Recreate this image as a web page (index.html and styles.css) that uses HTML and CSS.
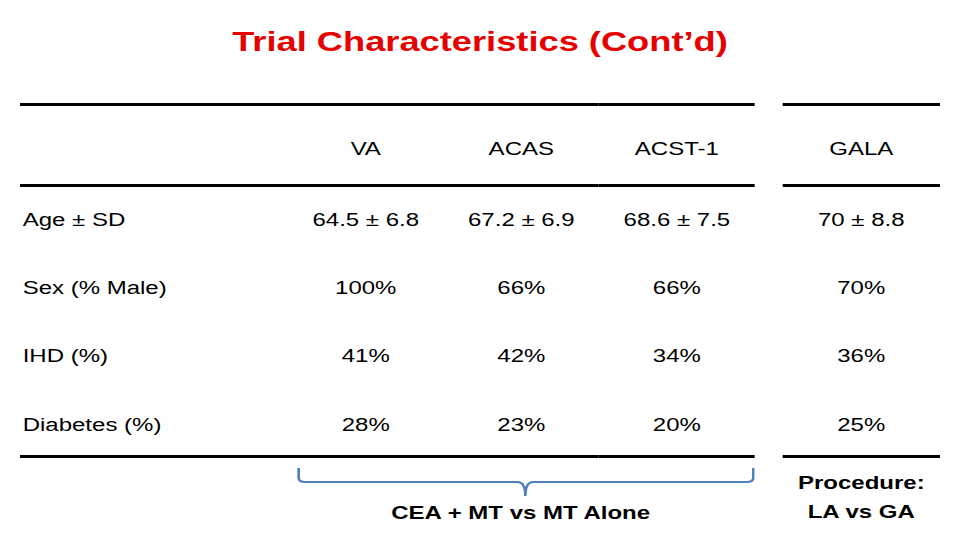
FILE: index.html
```html
<!DOCTYPE html>
<html lang="en">
<head>
<meta charset="utf-8">
<title>Trial Characteristics (Cont’d)</title>
<link rel="stylesheet" href="styles.css">
</head>
<body>
<div class="slide">
  <h1 class="title">Trial Characteristics (Cont’d)</h1>
  <div class="table">
    <div class="th label"></div>
    <div class="th">VA</div>
    <div class="th">ACAS</div>
    <div class="th">ACST-1</div>
    <div class="spacer"></div>
    <div class="th">GALA</div>

    <div class="td label">Age ± SD</div>
    <div class="td">64.5 ± 6.8</div>
    <div class="td">67.2 ± 6.9</div>
    <div class="td">68.6 ± 7.5</div>
    <div class="spacer"></div>
    <div class="td">70 ± 8.8</div>

    <div class="td label">Sex (% Male)</div>
    <div class="td">100%</div>
    <div class="td">66%</div>
    <div class="td">66%</div>
    <div class="spacer"></div>
    <div class="td">70%</div>

    <div class="td label">IHD (%)</div>
    <div class="td">41%</div>
    <div class="td">42%</div>
    <div class="td">34%</div>
    <div class="spacer"></div>
    <div class="td">36%</div>

    <div class="td label last">Diabetes (%)</div>
    <div class="td last">28%</div>
    <div class="td last">23%</div>
    <div class="td last">20%</div>
    <div class="spacer"></div>
    <div class="td last">25%</div>
  </div>
  <div class="footer">
    <div class="group">
      <svg class="bracket" width="350" height="40" viewBox="0 0 350 40">
        <path d="M8 10 V20 Q8 24 13 24 H172 Q178 24 178 38 Q178 24 184 24 H344 Q349 24 349 20 V10" fill="none" stroke="#4f7fbc" stroke-width="2" vector-effect="non-scaling-stroke"/>
      </svg>
      <div class="group-label">CEA + MT vs MT Alone</div>
    </div>
    <div class="procedure">Procedure:<br>LA vs GA</div>
  </div>
</div>
</body>
</html>
```

FILE: styles.css
```css
html, body {
  margin: 0;
  padding: 0;
  background: #ffffff;
  overflow: hidden;
}

.slide {
  width: 720px;
  height: 540px;
  transform: scaleX(1.33333);
  transform-origin: 0 0;
  font-family: "Liberation Sans", Arial, sans-serif;
  color: #000000;
}

.title {
  margin: 26px 0 0;
  font-size: 27.2px;
  line-height: 32px;
  font-weight: bold;
  color: #e60000;
  text-align: center;
}

.table {
  margin: 45px 0 0 15px;
  display: grid;
  grid-template-columns: 201px repeat(3, 116.67px) 21px 118px;
  font-size: 18px;
  line-height: 22px;
}

.th {
  border-top: 3px solid #000;
  border-bottom: 3px solid #000;
  padding: 32px 0 24px;
  text-align: center;
}

.td {
  height: 68px;
  padding-top: 22px;
  box-sizing: border-box;
  text-align: center;
}

.label {
  text-align: left;
  padding-left: 2px;
}

.last {
  border-bottom: 3px solid #000;
  height: 67px;
  padding-top: 23px;
}

.footer {
  margin-left: 15px;
  display: grid;
  grid-template-columns: 201px repeat(3, 116.67px) 21px 118px;
  font-size: 18px;
  font-weight: bold;
}

.group {
  grid-column: 2 / 5;
  display: flex;
  flex-direction: column;
}

.bracket {
  display: block;
}

.group-label {
  margin-top: 4px;
  text-align: center;
  line-height: 22px;
  padding-right: 1px;
}

.procedure {
  grid-column: 6;
  margin-top: 11px;
  text-align: center;
  line-height: 29px;
}
```
